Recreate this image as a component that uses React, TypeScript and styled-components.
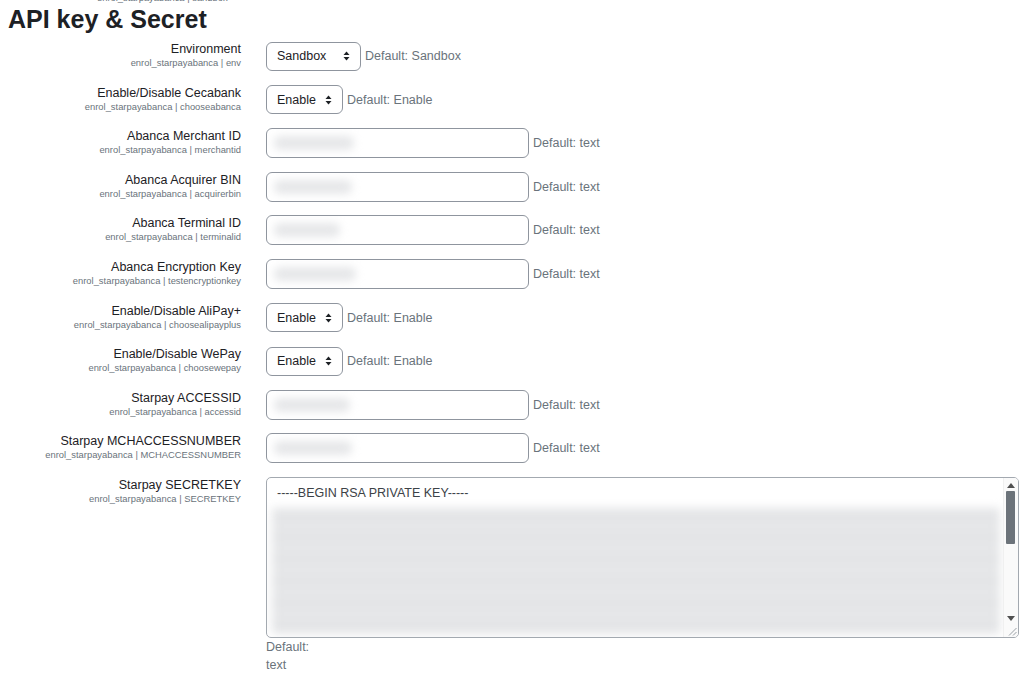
import React from "react";
import styled, { createGlobalStyle } from "styled-components";

const Global = createGlobalStyle`
  html, body { margin: 0; padding: 0; background: #fff; }
  body { font-family: "Liberation Sans", Arial, sans-serif; color: #1d2125; }
`;

const Page = styled.div`
  padding: 0 5px 0 8px;
  width: 1024px;
  box-sizing: border-box;
`;

const TopClip = styled.div`
  height: 4px;
  overflow: hidden;
  display: flex;
  align-items: flex-end;
  padding-left: 89px;
`;

const TopClipText = styled.div`
  font-size: 9.4px;
  line-height: 12px;
  color: #6a737b;
  flex: none;
`;

const Heading = styled.h2`
  margin: 0 0 7px 0;
  font-size: 25px;
  line-height: 30px;
  font-weight: 700;
  color: #1d2125;
`;

const Form = styled.div`
  display: grid;
  grid-template-columns: 233px 1fr;
  column-gap: 25px;
  row-gap: 13.6px;
`;

const LabelCol = styled.div`
  text-align: right;
`;

const Title = styled.div`
  font-size: 12.5px;
  line-height: 16px;
  color: #1d2125;
`;

const Sub = styled.div`
  font-size: 9.4px;
  line-height: 12px;
  color: #6a737b;
`;

const Field = styled.div`
  display: flex;
  align-items: center;
  gap: 4px;
  min-height: 30px;
`;

const FieldCol = styled.div`
  display: flex;
  flex-direction: column;
`;

const DefaultInfo = styled.div`
  font-size: 12.5px;
  line-height: 18px;
  color: #6a737b;
  white-space: nowrap;
`;

const SelectBox = styled.div<{ $w: number }>`
  width: ${(p) => p.$w}px;
  height: 29px;
  box-sizing: border-box;
  border: 1px solid #8f959e;
  border-radius: 6px;
  display: flex;
  align-items: center;
  justify-content: space-between;
  padding: 0 10px 0 10px;
  font-size: 12.5px;
  color: #1d2125;
  background: #fff;
`;

const TextBox = styled.div`
  width: 263px;
  height: 30px;
  box-sizing: border-box;
  border: 1px solid #8f959e;
  border-radius: 6px;
  background: #fff;
  display: flex;
  align-items: center;
  padding-left: 7px;
  overflow: hidden;
`;

const Blur = styled.div<{ $w: number }>`
  width: ${(p) => p.$w}px;
  height: 14px;
  background: #e6e7e9;
  filter: blur(4px);
  border-radius: 6px;
`;

const TextArea = styled.div`
  position: relative;
  width: 753px;
  height: 161px;
  box-sizing: border-box;
  border: 1px solid #a3a9b0;
  border-radius: 5px;
  background: #fff;
  overflow: hidden;
  display: flex;
  flex-direction: column;
  padding: 6px 18px 0 5px;
`;

const KeyLine = styled.div`
  font-size: 12.5px;
  line-height: 18px;
  color: #3c4247;
  padding-left: 5px;
  margin-bottom: 6px;
`;

const BlurBlock = styled.div`
  flex: 1;
  margin: 0 0 3px 0;
  background: repeating-linear-gradient(
    180deg,
    #e4e5e7 0px,
    #e4e5e7 14px,
    #e9eaeb 18px,
    #e4e5e7 22px
  );
  filter: blur(5px);
`;

const ScrollTrack = styled.div`
  position: absolute;
  top: 0;
  right: 0;
  bottom: 0;
  width: 14px;
  background: #fafafa;
  border-left: 1px solid #f0f0f0;
`;

const ScrollThumb = styled.div`
  position: absolute;
  top: 13px;
  left: 2px;
  width: 9px;
  height: 53px;
  background: #6c737a;
  border-radius: 1px;
`;

const ArrowUp = styled.svg`
  position: absolute;
  top: 5px;
  left: 3px;
`;

const ArrowDown = styled.svg`
  position: absolute;
  top: 138px;
  left: 3px;
`;

const Grip = styled.svg`
  position: absolute;
  bottom: 1px;
  right: 1px;
`;

const Updown = () => (
  <svg width="7" height="10" viewBox="0 0 7 10">
    <path d="M0.5 4 L3.5 0.5 L6.5 4 Z" fill="#1d2125" />
    <path d="M0.5 6 L3.5 9.5 L6.5 6 Z" fill="#1d2125" />
  </svg>
);

type Row =
  | { kind: "select"; title: string; key: string; value: string; w: number }
  | { kind: "text"; title: string; key: string; blur: number };

const rows: Row[] = [
  { kind: "select", title: "Environment", key: "env", value: "Sandbox", w: 95 },
  { kind: "select", title: "Enable/Disable Cecabank", key: "chooseabanca", value: "Enable", w: 77 },
  { kind: "text", title: "Abanca Merchant ID", key: "merchantid", blur: 80 },
  { kind: "text", title: "Abanca Acquirer BIN", key: "acquirerbin", blur: 78 },
  { kind: "text", title: "Abanca Terminal ID", key: "terminalid", blur: 66 },
  { kind: "text", title: "Abanca Encryption Key", key: "testencryptionkey", blur: 82 },
  { kind: "select", title: "Enable/Disable AliPay+", key: "choosealipayplus", value: "Enable", w: 77 },
  { kind: "select", title: "Enable/Disable WePay", key: "choosewepay", value: "Enable", w: 77 },
  { kind: "text", title: "Starpay ACCESSID", key: "accessid", blur: 76 },
  { kind: "text", title: "Starpay MCHACCESSNUMBER", key: "MCHACCESSNUMBER", blur: 78 },
];

export default function App() {
  return (
    <Page>
      <Global />
      <TopClip>
        <TopClipText>enrol_starpayabanca | sandbox</TopClipText>
      </TopClip>
      <Heading>API key &amp; Secret</Heading>
      <Form>
        {rows.map((r) => (
          <React.Fragment key={r.key}>
            <LabelCol>
              <Title>{r.title}</Title>
              <Sub>enrol_starpayabanca | {r.key}</Sub>
            </LabelCol>
            {r.kind === "select" ? (
              <Field>
                <SelectBox $w={r.w}>
                  <span>{r.value}</span>
                  <Updown />
                </SelectBox>
                <DefaultInfo>Default: {r.value}</DefaultInfo>
              </Field>
            ) : (
              <Field>
                <TextBox>
                  <Blur $w={r.blur} />
                </TextBox>
                <DefaultInfo>Default: text</DefaultInfo>
              </Field>
            )}
          </React.Fragment>
        ))}
        <LabelCol>
          <Title>Starpay SECRETKEY</Title>
          <Sub>enrol_starpayabanca | SECRETKEY</Sub>
        </LabelCol>
        <FieldCol>
          <TextArea>
            <KeyLine>-----BEGIN RSA PRIVATE KEY-----</KeyLine>
            <BlurBlock />
            <ScrollTrack>
              <ArrowUp width="8" height="5" viewBox="0 0 8 5">
                <path d="M0 5 L4 0 L8 5 Z" fill="#505050" />
              </ArrowUp>
              <ScrollThumb />
              <ArrowDown width="8" height="5" viewBox="0 0 8 5">
                <path d="M0 0 L4 5 L8 0 Z" fill="#505050" />
              </ArrowDown>
            </ScrollTrack>
            <Grip width="9" height="9" viewBox="0 0 9 9">
              <path d="M8.5 1 L1 8.5 M8.5 5 L5 8.5" stroke="#9aa0a6" strokeWidth="1" />
            </Grip>
          </TextArea>
          <DefaultInfo>Default:</DefaultInfo>
          <DefaultInfo>text</DefaultInfo>
        </FieldCol>
      </Form>
    </Page>
  );
}
